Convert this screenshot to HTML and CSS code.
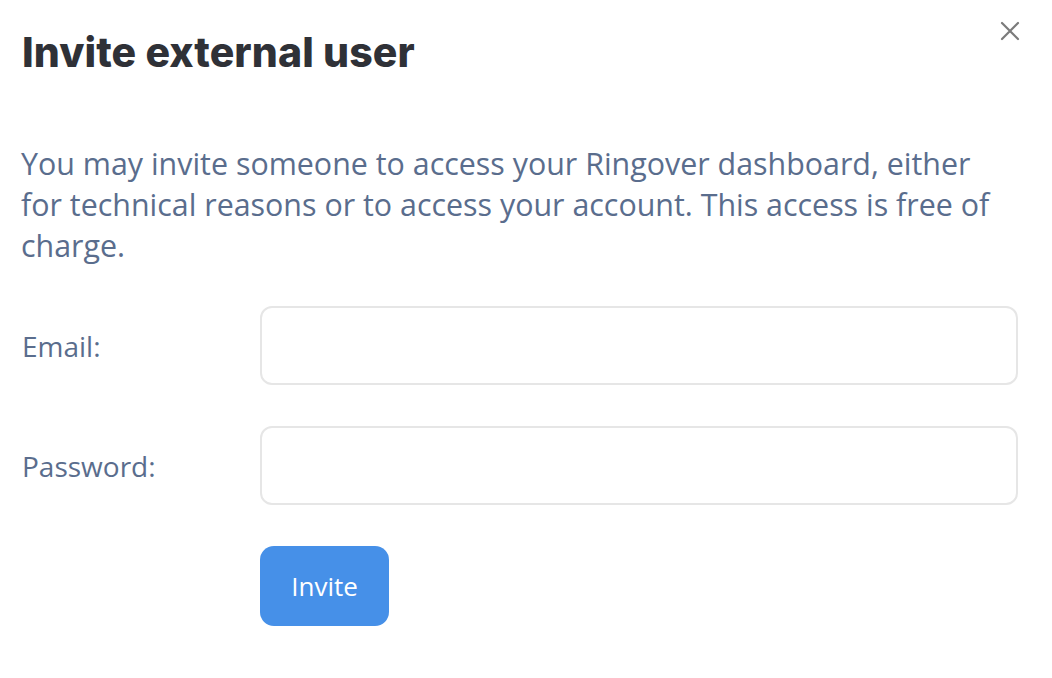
FILE: index.html
```html
<!DOCTYPE html>
<html>
<head>
<meta charset="utf-8">
<link rel="stylesheet" href="styles.css">
</head>
<body>
<div class="modal">
  <div class="header">
    <h1 class="title">Invite external user</h1>
    <button class="close" aria-label="Close">
      <svg width="20" height="20" viewBox="0 0 20 20"><path d="M2 2L18 18M18 2L2 18" stroke="#7b7b7b" stroke-width="2.2" stroke-linecap="round"/></svg>
    </button>
  </div>
  <p class="desc">You may invite someone to access your Ringover dashboard, either for technical reasons or to access your account. This access is free of charge.</p>
  <div class="form">
    <label class="label">Email:</label>
    <input class="input" type="text">
    <label class="label">Password:</label>
    <input class="input" type="password">
    <div></div>
    <div><button class="btn">Invite</button></div>
  </div>
</div>
</body>
</html>
```
FILE: styles.css
```css
html, body { margin: 0; padding: 0; background: #fff; }
.modal { width: 1052px; height: 678px; box-sizing: border-box; padding: 0 34px 0 22px; font-family: "Open Sans", sans-serif; }
.header { display: flex; justify-content: space-between; align-items: flex-start; }
.title { margin: 27px 0 0; font-family: Inter, sans-serif; font-weight: 800; font-size: 41px; line-height: 50px; color: #2f3137; letter-spacing: 0.1px; }
.close { margin: 20px -3px 0 0; padding: 0; border: none; background: none; width: 22px; height: 22px; display: flex; align-items: center; justify-content: center; }
.desc { margin: 66px 0 0 -1px; font-size: 30.4px; line-height: 41px; color: #5a6d8d; width: 990px; }
.form { display: grid; grid-template-columns: 238px 758px; row-gap: 41px; align-items: center; margin-top: 40px; }
.label { font-size: 28px; color: #5a6d8d; }
.input { height: 79px; box-sizing: border-box; border: 2px solid #e6e6e6; border-radius: 12px; background: #fff; width: 758px; margin: 0; }
.btn { margin-top: 0; height: 80px; width: 129px; border: none; border-radius: 14px; background: #4690e8; color: #fff; font-family: "Open Sans", sans-serif; font-size: 26px; padding: 0; }
```
